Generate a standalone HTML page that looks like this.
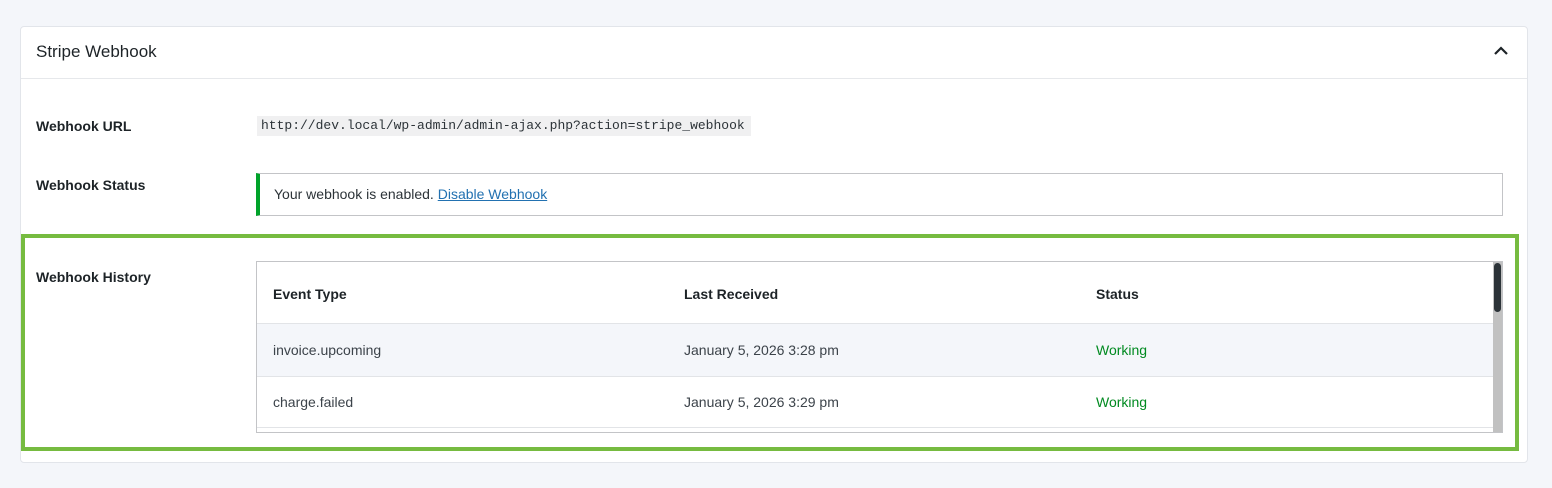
<!DOCTYPE html>
<html><head><style>
body{margin:0;width:1552px;height:488px;background:#f4f6fa;font-family:"Liberation Sans",sans-serif;position:relative;overflow:hidden;color:#1d2327}
.a{position:absolute}
.card{left:20px;top:26px;width:1508px;height:437px;background:#fff;border:1px solid #e2e5ea;border-radius:4px;box-sizing:border-box}
.lbl{font-size:14px;font-weight:bold;color:#1d2327}
.td{font-size:14px;color:#3c434a}
</style></head><body>
<div class="a card"></div>
<div class="a" style="left:36px;top:42px;font-size:17px;color:#1d2327">Stripe Webhook</div>
<svg class="a" style="left:1493px;top:45px" width="16" height="12"><path d="M2 9 L8 3 L14 9" fill="none" stroke="#1d2327" stroke-width="2.2"/></svg>
<div class="a" style="left:21px;top:78px;width:1506px;height:1px;background:#e6e8eb"></div>
<div class="a lbl" style="left:36px;top:118px">Webhook URL</div>
<div class="a" style="left:257px;top:116px;width:494px;height:20px;background:#f0f0f1;font-family:'Liberation Mono',monospace;font-size:13px;line-height:20px;padding-left:4px;box-sizing:border-box;color:#2c3338">http://dev.local/wp-admin/admin-ajax.php?action=stripe_webhook</div>
<div class="a lbl" style="left:36px;top:177px">Webhook Status</div>
<div class="a" style="left:256px;top:173px;width:1247px;height:43px;border:1px solid #c3c4c7;border-left:4px solid #00a32a;box-sizing:border-box;font-size:14px;line-height:41px;padding-left:14px;color:#2c3338">Your webhook is enabled. <span style="color:#2271b1;text-decoration:underline">Disable Webhook</span></div>
<div class="a" style="left:21px;top:234px;width:1498px;height:217px;border:4px solid #76bb40;box-sizing:border-box"></div>
<div class="a lbl" style="left:36px;top:269px">Webhook History</div>
<div class="a" style="left:256px;top:261px;width:1247px;height:172px;border:1px solid #c3c4c7;box-sizing:border-box;overflow:hidden">
 <div class="a" style="left:0;top:61px;width:1236px;height:52px;background:#f4f6fa;border-top:1px solid #e2e4e7;border-bottom:1px solid #e2e4e7"></div>
 <div class="a" style="left:0;top:165px;width:1236px;height:1px;background:#e2e4e7"></div>
 <div class="a lbl" style="left:16px;top:24px">Event Type</div>
 <div class="a lbl" style="left:427px;top:24px">Last Received</div>
 <div class="a lbl" style="left:839px;top:24px">Status</div>
 <div class="a td" style="left:16px;top:80px">invoice.upcoming</div>
 <div class="a td" style="left:427px;top:80px">January 5, 2026 3:28 pm</div>
 <div class="a td" style="left:839px;top:80px;color:#008a20">Working</div>
 <div class="a td" style="left:16px;top:132px">charge.failed</div>
 <div class="a td" style="left:427px;top:132px">January 5, 2026 3:29 pm</div>
 <div class="a td" style="left:839px;top:132px;color:#008a20">Working</div>
 <div class="a" style="left:1236px;top:0;width:9px;height:170px;background:#c1c1c1"></div>
 <div class="a" style="left:1237px;top:1px;width:7px;height:49px;background:#2c3338;border-radius:4px"></div>
</div>
</body></html>
